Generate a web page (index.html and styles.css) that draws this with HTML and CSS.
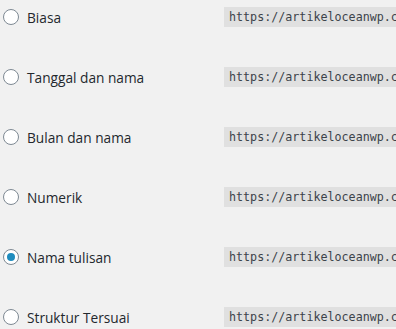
FILE: index.html
```html
<!DOCTYPE html>
<html lang="id">

<head>
    <meta charset="UTF-8" />
    <meta name="viewport" content="width=device-width, initial-scale=1.0" />
    <title>Pengaturan Permalink</title>
    <link rel="stylesheet" href="styles.css">
</head>

<body>
    <div class="permalink-list">
        <div class="permalink-row">
            <label class="permalink-label"><span class="radio"></span>Biasa</label>
            <code class="permalink-code">https://artikeloceanwp.com/?p=123</code>
        </div>
        <div class="permalink-row">
            <label class="permalink-label"><span class="radio"></span>Tanggal dan nama</label>
            <code class="permalink-code">https://artikeloceanwp.com/2019/05/16/contoh-tulisan/</code>
        </div>
        <div class="permalink-row">
            <label class="permalink-label"><span class="radio"></span>Bulan dan nama</label>
            <code class="permalink-code">https://artikeloceanwp.com/2019/05/contoh-tulisan/</code>
        </div>
        <div class="permalink-row">
            <label class="permalink-label"><span class="radio"></span>Numerik</label>
            <code class="permalink-code">https://artikeloceanwp.com/archives/123</code>
        </div>
        <div class="permalink-row">
            <label class="permalink-label"><span class="radio checked"></span>Nama tulisan</label>
            <code class="permalink-code">https://artikeloceanwp.com/contoh-tulisan/</code>
        </div>
        <div class="permalink-row">
            <label class="permalink-label"><span class="radio"></span>Struktur Tersuai</label>
            <code class="permalink-code">https://artikeloceanwp.com</code>
        </div>
    </div>
</body>

</html>
```
FILE: styles.css
```css
body {
    margin: 0;
    background: #f1f1f1;
    color: #23282d;
    font-family: "Open Sans", sans-serif;
    font-size: 13.7px;
    overflow: hidden;
}

.permalink-list {
    display: flex;
    flex-direction: column;
    gap: 40px;
    padding-top: 7px;
}

.permalink-row {
    display: flex;
    align-items: center;
    height: 20px;
    white-space: nowrap;
}

.permalink-label {
    display: flex;
    align-items: center;
    gap: 8px;
    width: 221px;
    flex-shrink: 0;
    padding-left: 3px;
}

.radio {
    box-sizing: border-box;
    width: 16px;
    height: 16px;
    border: 1px solid #7e8993;
    border-radius: 50%;
    background: #fff;
    display: flex;
    align-items: center;
    justify-content: center;
}

.radio.checked::before {
    content: "";
    width: 8px;
    height: 8px;
    border-radius: 50%;
    background: #1e8cbe;
}

.permalink-code {
    background: rgba(0, 0, 0, 0.07);
    font-family: "DejaVu Sans Mono", monospace;
    font-size: 11.7px;
    line-height: 20px;
    padding: 0 5px;
    color: #3c434a;
}
```
